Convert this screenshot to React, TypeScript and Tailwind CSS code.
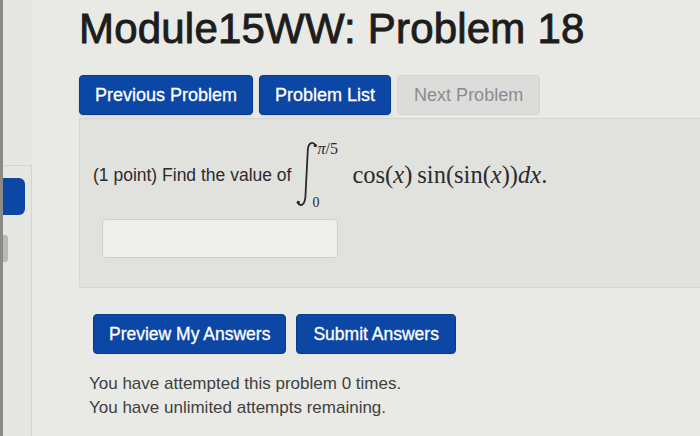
import React from "react";

function IntegralSign() {
  return (
    <svg width="24" height="68" viewBox="0 0 24 68" className="block" aria-hidden>
      <path
        d="M20.5,5 C18,1.5 13.5,2 12.8,10 L10.4,57 C9.8,65 5.5,67 3,63"
        fill="none"
        stroke="#2a2a2a"
        strokeWidth="1.8"
        strokeLinecap="round"
      />
      <circle cx="20.3" cy="5.6" r="1.7" fill="#2a2a2a" />
      <circle cx="3.3" cy="62.4" r="1.7" fill="#2a2a2a" />
    </svg>
  );
}

function NavButton({ label, disabled }: { label: string; disabled?: boolean }) {
  return disabled ? (
    <button className="h-[40px] rounded-[4px] border border-[#d4d4d2] bg-[#dcdcda] px-[16px] text-[18px] text-[#8c8c8c]">
      {label}
    </button>
  ) : (
    <button className="h-[40px] rounded-[4px] border border-[#083b8c] bg-[#0c47a5] px-[15px] text-[18px] text-white shadow-sm [-webkit-text-stroke:0.3px_white]">
      {label}
    </button>
  );
}

const serif = { fontFamily: '"Liberation Serif", "DejaVu Serif", serif' };

export default function App() {
  return (
    <div
      className="flex h-[436px] w-[700px] overflow-hidden bg-[#e9e9e6]"
      style={{ fontFamily: '"Liberation Sans", Arial, sans-serif' }}
    >
      {/* left sidebar edge */}
      <div className="flex w-[32px] shrink-0 flex-col border-l-[3px] border-[#8a8a88] bg-[#e6e6e3] pt-[165px]">
        <div className="flex flex-1 flex-col border-r border-t border-[#d4d4d1] pt-[12px]">
          <div className="h-[37px] w-[22px] rounded-r-[6px] bg-[#0c47a5]" />
          <div className="mt-[20px] h-[27px] w-[5px] rounded-r-[3px] bg-[#b9b9b7]" />
        </div>
      </div>

      {/* main */}
      <div className="flex flex-1 flex-col pl-[47px]">
        <h1 className="mt-[6px] text-[42px] leading-[46px] tracking-[0.2px] text-[#1d1d1d] [-webkit-text-stroke:0.9px_#1d1d1d]">
          Module15WW: Problem 18
        </h1>

        <div className="mt-[23px] flex gap-[6px]">
          <NavButton label="Previous Problem" />
          <NavButton label="Problem List" />
          <NavButton label="Next Problem" disabled />
        </div>

        <div className="mt-[3px] h-[170px] rounded-l-[3px] border border-r-0 border-[#d5d5d2] bg-[#e1e1de] pl-[13px] pt-[21px]">
          <div className="flex items-center text-[17.5px] text-[#2b2b2b]">
            <span className="mt-[2px]">(1 point) Find the value of</span>
            <div className="relative ml-[4px] h-[68px] w-[30px]">
              <IntegralSign />
              <span className="absolute left-[22px] top-[-3px] text-[16px] text-[#2b2b2b]" style={serif}>
                <i>π</i>/5
              </span>
              <span className="absolute left-[17px] top-[52px] text-[14px] text-[#2b2b2b]" style={serif}>
                0
              </span>
            </div>
            <span className="ml-[27px] mt-[2px] text-[24.5px] text-[#2b2b2b]" style={serif}>
              cos(<i>x</i>)<span className="inline-block w-[5px]" />sin(sin(<i>x</i>))<i>dx</i>.
            </span>
          </div>

          <div className="ml-[9px] mt-[11px] h-[39px] w-[236px] rounded-[3px] border border-[#cfcfcc] bg-[#eeeeec]" />
        </div>

        <div className="mt-[26px] flex gap-[10px] pl-[14px]">
          <button className="h-[40px] rounded-[4px] border border-[#083b8c] bg-[#0c47a5] px-[15px] text-[17.5px] text-white [-webkit-text-stroke:0.3px_white]">
            Preview My Answers
          </button>
          <button className="h-[40px] rounded-[4px] border border-[#083b8c] bg-[#0c47a5] px-[16px] text-[17.5px] text-white [-webkit-text-stroke:0.3px_white]">
            Submit Answers
          </button>
        </div>

        <div className="mt-[18px] pl-[10px] text-[17px] leading-[24px] text-[#3f3f3f]">
          <p>You have attempted this problem 0 times.</p>
          <p>You have unlimited attempts remaining.</p>
        </div>
      </div>
    </div>
  );
}
